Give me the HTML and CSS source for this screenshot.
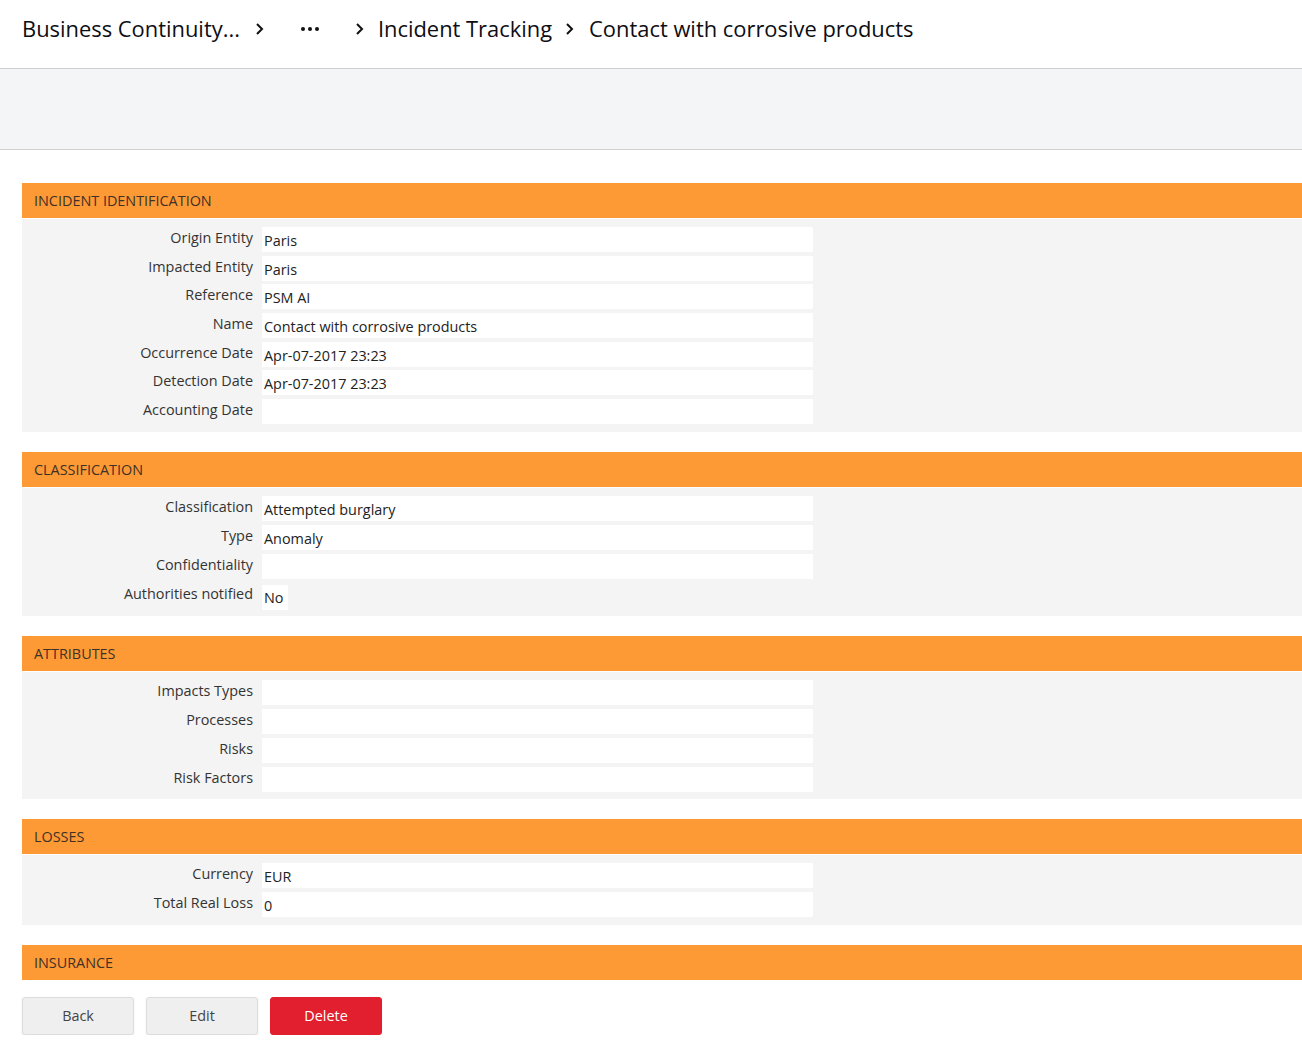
FILE: index.html
```html
<!DOCTYPE html>
<html lang="en">
<head>
<meta charset="utf-8">
<title>Contact with corrosive products</title>
<link rel="stylesheet" href="styles.css">
</head>
<body>
<header class="topbar">
  <nav class="crumbs">
    <span class="crumb">Business Continuity...</span>
    <svg class="chev chev-a" width="10" height="14" viewBox="0 0 10 14"><polyline points="3,2 8,7 3,12" fill="none" stroke="#111" stroke-width="2"/></svg>
    <span class="more"><i></i><i></i><i></i></span>
    <svg class="chev chev-b" width="10" height="14" viewBox="0 0 10 14"><polyline points="3,2 8,7 3,12" fill="none" stroke="#111" stroke-width="2"/></svg>
    <span class="crumb">Incident Tracking</span>
    <svg class="chev chev-c" width="10" height="14" viewBox="0 0 10 14"><polyline points="3,2 8,7 3,12" fill="none" stroke="#111" stroke-width="2"/></svg>
    <span class="crumb">Contact with corrosive products</span>
  </nav>
</header>
<div class="band"></div>

<main class="content">
  <section class="panel">
    <h2 class="panel-head">INCIDENT IDENTIFICATION</h2>
    <div class="panel-body panel-body-tight">
      <div class="row"><span class="lbl">Origin Entity</span><span class="val">Paris</span></div>
      <div class="row"><span class="lbl">Impacted Entity</span><span class="val">Paris</span></div>
      <div class="row"><span class="lbl">Reference</span><span class="val">PSM AI</span></div>
      <div class="row"><span class="lbl">Name</span><span class="val">Contact with corrosive products</span></div>
      <div class="row"><span class="lbl">Occurrence Date</span><span class="val">Apr-07-2017 23:23</span></div>
      <div class="row"><span class="lbl">Detection Date</span><span class="val">Apr-07-2017 23:23</span></div>
      <div class="row"><span class="lbl">Accounting Date</span><span class="val"></span></div>
    </div>
  </section>

  <section class="panel">
    <h2 class="panel-head">CLASSIFICATION</h2>
    <div class="panel-body">
      <div class="row"><span class="lbl">Classification</span><span class="val">Attempted burglary</span></div>
      <div class="row"><span class="lbl">Type</span><span class="val">Anomaly</span></div>
      <div class="row"><span class="lbl">Confidentiality</span><span class="val"></span></div>
      <div class="row"><span class="lbl">Authorities notified</span><span class="val val-fit">No</span></div>
    </div>
  </section>

  <section class="panel">
    <h2 class="panel-head">ATTRIBUTES</h2>
    <div class="panel-body panel-body-short">
      <div class="row"><span class="lbl">Impacts Types</span><span class="val"></span></div>
      <div class="row"><span class="lbl">Processes</span><span class="val"></span></div>
      <div class="row"><span class="lbl">Risks</span><span class="val"></span></div>
      <div class="row"><span class="lbl">Risk Factors</span><span class="val"></span></div>
    </div>
  </section>

  <section class="panel">
    <h2 class="panel-head">LOSSES</h2>
    <div class="panel-body">
      <div class="row"><span class="lbl">Currency</span><span class="val">EUR</span></div>
      <div class="row"><span class="lbl">Total Real Loss</span><span class="val">0</span></div>
    </div>
  </section>

  <section class="panel">
    <h2 class="panel-head">INSURANCE</h2>
  </section>

  <div class="actions">
    <button class="btn">Back</button>
    <button class="btn">Edit</button>
    <button class="btn btn-danger">Delete</button>
  </div>
</main>
</body>
</html>
```

FILE: styles.css
```css
* { box-sizing: border-box; }
html, body { margin: 0; padding: 0; }
body {
  font-family: "Open Sans", "Noto Sans", "Liberation Sans", sans-serif;
  color: #222;
  background: #fff;
  overflow: hidden;
}
.topbar {
  height: 69px;
  border-bottom: 1px solid #cfcfcf;
  display: flex;
  align-items: center;
  padding-left: 22px;
}
.crumbs {
  display: flex;
  align-items: center;
  font-size: 21.9px;
  color: #0d0d14;
  margin-top: -11px;
}
.chev { flex: none; }
.chev-a { margin: 0 37px 0 14px; }
.chev-b { margin: 0 14px 0 35px; }
.chev-c { margin: 0 15px 0 12px; }
.more { display: flex; gap: 3px; }
.more i { width: 4px; height: 4px; border-radius: 50%; background: #111; display: block; }
.band {
  height: 81px;
  background: #f4f5f7;
  border-bottom: 1px solid #cfcfcf;
}
.content {
  padding: 33px 0 0 22px;
}
.panel { margin-bottom: 20px; }
.panel-head {
  margin: 0;
  height: 35px;
  background: #fe9a35;
  color: #3d3128;
  font-size: 14.4px;
  font-weight: 400;
  padding-left: 12px;
  display: flex;
  align-items: center;
}
.panel-body {
  background: #f4f4f4;
  padding: 8px 0 8px;
  margin-top: 1px;
  display: flex;
  flex-direction: column;
  gap: 4px;
}
.panel-body-tight { gap: 3.67px; }
.panel-body-short { padding-bottom: 7px; }
.row {
  display: flex;
  align-items: flex-start;
  height: 25px;
}
.lbl {
  width: 231px;
  text-align: right;
  font-size: 14.4px;
  color: #333;
  padding-top: 1px;
  line-height: 20px;
}
.val {
  margin-left: 9px;
  width: 551px;
  height: 25px;
  background: #fff;
  font-size: 14.4px;
  color: #222;
  padding: 4px 0 0 2px;
  line-height: 20px;
}
.val-fit { width: auto; padding-right: 4px; margin-top: 2px; padding-top: 3px; }
.actions {
  display: flex;
  gap: 12px;
  margin-top: -3px;
}
.btn {
  width: 112px;
  height: 38px;
  border: 1px solid #dcdcdc;
  border-radius: 3px;
  background: #efefef;
  color: #444;
  font-family: inherit;
  font-size: 14.4px;
  box-shadow: 0 1px 2px rgba(0,0,0,0.08);
}
.btn-danger {
  background: #e21f2f;
  border-color: #e21f2f;
  color: #fff;
}
```
